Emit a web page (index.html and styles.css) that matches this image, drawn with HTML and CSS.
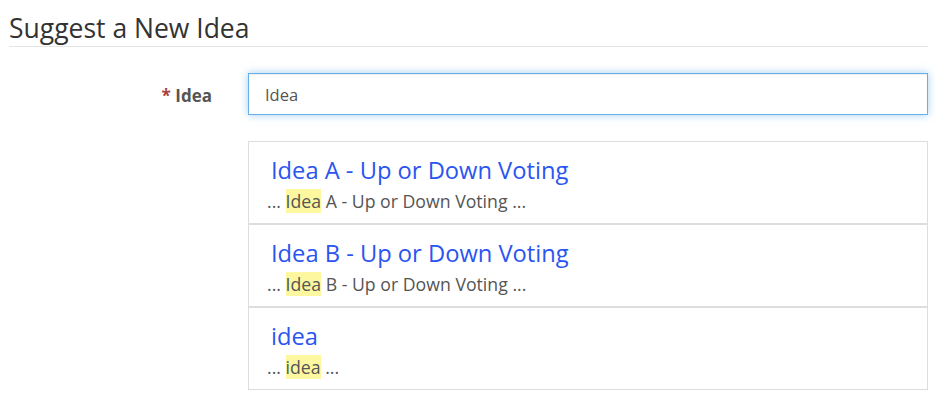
FILE: index.html
```html
<!DOCTYPE html>
<html>
<head>
<meta charset="utf-8">
<link rel="stylesheet" href="styles.css">
</head>
<body>
<div class="page">
  <h1 class="title">Suggest a New Idea</h1>
  <div class="row">
    <label class="label"><span class="req">*</span> Idea</label>
    <div class="field">
      <input class="input" type="text" value="Idea">
    </div>
  </div>
  <div class="row">
    <div class="label"></div>
    <div class="field">
      <ul class="results">
        <li class="item">
          <a class="item-title">Idea A - Up or Down Voting</a>
          <div class="snippet">... <mark class="hl">Idea</mark> A - Up or Down Voting ...</div>
        </li>
        <li class="item">
          <a class="item-title">Idea B - Up or Down Voting</a>
          <div class="snippet">... <mark class="hl">Idea</mark> B - Up or Down Voting ...</div>
        </li>
        <li class="item">
          <a class="item-title">idea</a>
          <div class="snippet">... <mark class="hl">idea</mark> ...</div>
        </li>
      </ul>
    </div>
  </div>
</div>
</body>
</html>
```
FILE: styles.css
```css
html, body {
  margin: 0;
  padding: 0;
  background: #fff;
}
body {
  font-family: "Open Sans", "Noto Sans", sans-serif;
  color: #333;
}
.page {
  padding: 12px 24px 0 9px;
}
.title {
  margin: 0;
  padding: 0 0 2px 0;
  font-size: 26.5px;
  font-weight: 400;
  line-height: 32px;
  color: #333;
  border-bottom: 1px solid #e5e5e5;
}
.row {
  display: flex;
  align-items: flex-start;
}
.row:first-of-type {
  margin-top: 26px;
}
.label {
  width: 203px;
  flex: none;
  text-align: right;
  font-weight: 700;
  font-size: 17px;
  color: #555;
  line-height: 46px;
  padding-right: 36px;
}
.req {
  color: #a94442;
}
.field {
  flex: 1;
}
.input {
  display: block;
  box-sizing: border-box;
  width: 100%;
  height: 42px;
  margin: 0 0 26px 0;
  padding: 0 16px;
  border: 1px solid #66afe9;
  outline: none;
  box-shadow: inset 0 1px 1px rgba(0,0,0,.075), 0 0 8px rgba(102,175,233,.6);
  font-family: inherit;
  font-size: 16.5px;
  color: #555;
}
.results {
  list-style: none;
  margin: 0;
  padding: 0;
}
.item {
  border: 1px solid #ddd;
  height: 81px;
  padding: 0 0 0 22px;
  box-sizing: content-box;
}
.item-title {
  display: block;
  padding-top: 12px;
  font-size: 23.7px;
  line-height: 32px;
  color: #2b55f0;
}
.snippet {
  margin-left: -4px;
  margin-top: 2px;
  font-size: 17.7px;
  line-height: 26px;
  color: #555;
}
.hl {
  background: #fdf8a0;
  color: #555;
  padding: 0;
}
```
